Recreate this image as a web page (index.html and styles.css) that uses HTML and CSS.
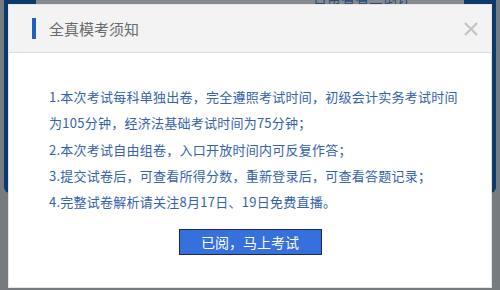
FILE: index.html
```html
<!DOCTYPE html>
<html lang="zh-CN">
<head>
<meta charset="utf-8">
<title>全真模考须知</title>
<link rel="stylesheet" href="styles.css">
</head>
<body>
<div class="page">
  <div class="page-strip"><span class="strip-text">日常看看三倒计</span></div>
</div>
<div class="dialog">
  <div class="dialog-head">
    <span class="head-bar"></span>
    <span class="head-title">全真模考须知</span>
    <span class="close" aria-label="关闭">
      <svg width="14" height="14" viewBox="0 0 14 14"><path d="M1 1 L13 13 M13 1 L1 13" stroke="#c4c4c4" stroke-width="2.2" fill="none"/></svg>
    </span>
  </div>
  <div class="dialog-body">
    <p class="line">1.本次考试每科单独出卷，完全遵照考试时间，初级会计实务考试时间</p>
    <p class="line">为105分钟，经济法基础考试时间为75分钟；</p>
    <p class="line">2.本次考试自由组卷，入口开放时间内可反复作答；</p>
    <p class="line">3.提交试卷后，可查看所得分数，重新登录后，可查看答题记录；</p>
    <p class="line">4.完整试卷解析请关注8月17日、19日免费直播。</p>
    <div class="actions"><button class="btn">已阅，马上考试</button></div>
  </div>
</div>
</body>
</html>
```
FILE: styles.css
```css
html, body {
  margin: 0;
  padding: 0;
}
body {
  width: 500px;
  height: 290px;
  background: #767b80;
  font-family: "Noto Sans CJK SC", "Noto Sans", sans-serif;
  position: relative;
  overflow: hidden;
}
.page {
  margin: 0 4px;
  height: 193px;
  background: #0d3a6c;
  border-radius: 0 0 6px 6px;
  padding: 0 32px 0 32px;
}
.page-strip {
  height: 4px;
  background: #868a8e;
  overflow: hidden;
  position: relative;
}
.strip-text {
  display: block;
  font-size: 14px;
  color: #2a4a7a;
  line-height: 14px;
  margin-top: -10px;
  padding-left: 277px;
}
.dialog {
  position: absolute;
  left: 8px;
  top: 4px;
  width: 484px;
  height: 284px;
  box-sizing: border-box;
  background: #fff;
  border: 1px solid #e4e4e4;
}
.dialog-head {
  height: 47px;
  background: #f3f3f3;
  border-bottom: 1px solid #d7dce5;
  display: flex;
  align-items: center;
  padding-left: 23px;
  padding-right: 13px;
}
.head-bar {
  width: 4px;
  height: 21px;
  background: #1f5fc0;
  margin-right: 13px;
}
.head-title {
  font-size: 15px;
  color: #6a6a6a;
}
.close {
  margin-left: auto;
  display: flex;
}
.dialog-body {
  padding: 31px 0 0 40px;
}
.line {
  margin: 0;
  font-size: 13px;
  line-height: 26.3px;
  color: #3462ad;
  letter-spacing: 0.25px;
  white-space: nowrap;
}
.actions {
  display: flex;
  justify-content: center;
  margin-top: 14px;
  margin-left: -40px;
}
.btn {
  width: 143px;
  height: 26px;
  background: #3670dc;
  border: 1px solid #1c2a44;
  color: #fff;
  font-family: inherit;
  font-size: 14px;
  padding: 0;
}
```
